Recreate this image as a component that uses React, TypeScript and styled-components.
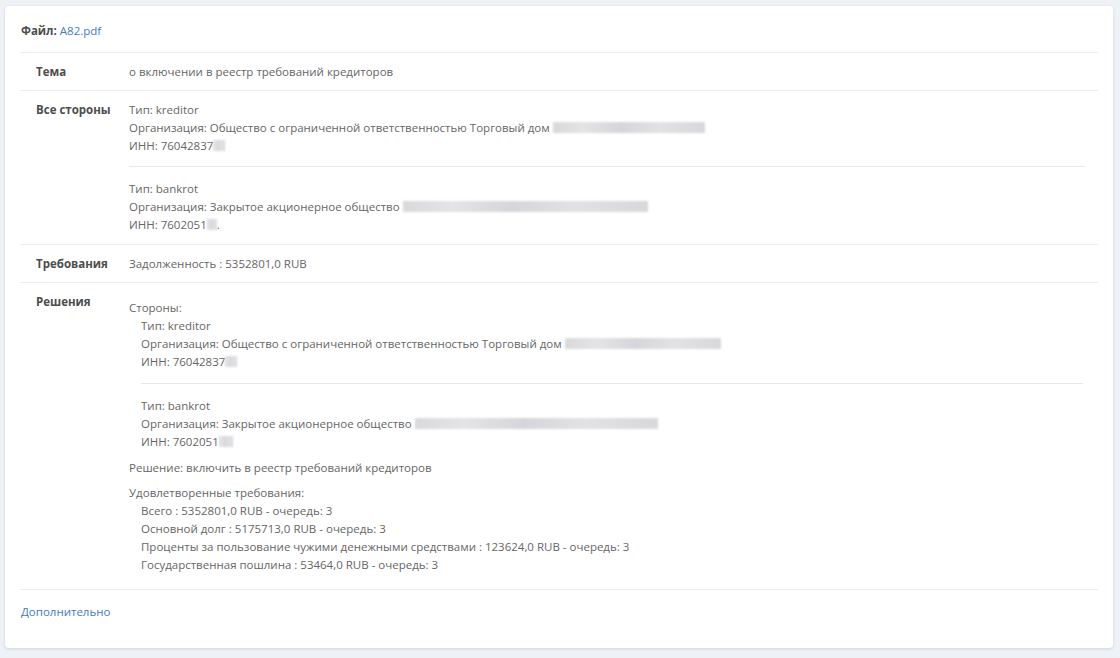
import React from "react";
import styled, { createGlobalStyle } from "styled-components";

const GlobalStyle = createGlobalStyle`
  html, body { margin: 0; padding: 0; background: #eef1f6; }
  body { font-family: "Open Sans", "Noto Sans", sans-serif; }
  * { box-sizing: border-box; }
`;

const Page = styled.div`
  padding: 6px 7px 11px 5px;
  min-height: 658px;
`;

const Card = styled.div`
  background: #fff;
  border-radius: 4px;
  box-shadow: 0 1px 3px rgba(60, 75, 110, 0.18);
  padding: 0 15px 0 15px;
  font-size: 11.5px;
  color: #666;
  line-height: 18px;
`;

const FileLine = styled.div`
  padding: 16px 0 12px 1px;
  border-bottom: 1px solid #eceef1;
`;

const Bold = styled.span`
  font-weight: 700;
  color: #4d4d4d;
`;

const Link = styled.a`
  color: #3f7cc4;
  text-decoration: none;
`;

const Row = styled.div`
  display: grid;
  grid-template-columns: 109px 1fr;
  border-bottom: 1px solid #eceef1;
`;

const Label = styled.div`
  padding: 10px 0 9px 16px;
  font-weight: 700;
  color: #4d4d4d;
`;

const Value = styled.div<{ $top?: number; $bottom?: number }>`
  padding: ${(p) => p.$top ?? 10}px 0 ${(p) => p.$bottom ?? 9}px 0;
`;

const Party = styled.div<{ $indent?: number; $right?: number }>`
  margin-left: ${(p) => p.$indent ?? 0}px;
  margin-right: ${(p) => p.$right ?? 13}px;
  & + & {
    border-top: 1px solid #e6e8ec;
  }
`;

const PartyInner = styled.div<{ $top: number; $bottom: number }>`
  padding: ${(p) => p.$top}px 0 ${(p) => p.$bottom}px 0;
`;

const Line = styled.div``;

const Indented = styled.div`
  padding-left: 12px;
`;

const Block = styled.div<{ $mt: number }>`
  margin-top: ${(p) => p.$mt}px;
`;

const Blur = styled.span<{ $w: number }>`
  display: inline-block;
  vertical-align: middle;
  width: ${(p) => p.$w}px;
  height: 11px;
  margin-top: -2px;
  background: linear-gradient(90deg, #d9d9dc, #e4e4e7 20%, #d6d6da 45%, #e2e2e5 70%, #d8d8dc);
  filter: blur(1.2px);
`;

const Footer = styled.div`
  padding: 13px 0 27px 1px;
`;

type PartyData = { type: string; org: string; orgBlur: number; inn: string; innBlur: number; dot?: boolean };

const PartyLines: React.FC<{ p: PartyData }> = ({ p }) => (
  <>
    <Line>Тип: {p.type}</Line>
    <Line>
      Организация: {p.org} <Blur $w={p.orgBlur} />
    </Line>
    <Line>
      ИНН: {p.inn}
      <Blur $w={p.innBlur} />
      {p.dot ? "." : ""}
    </Line>
  </>
);

const kred1: PartyData = {
  type: "kreditor",
  org: "Общество с ограниченной ответственностью Торговый дом",
  orgBlur: 152,
  inn: "76042837",
  innBlur: 12,
};
const bank1: PartyData = {
  type: "bankrot",
  org: "Закрытое акционерное общество",
  orgBlur: 245,
  inn: "7602051",
  innBlur: 10,
  dot: true,
};
const kred2: PartyData = { ...kred1, orgBlur: 156 };
const bank2: PartyData = { ...bank1, orgBlur: 243, innBlur: 14, dot: false };

export default function App() {
  return (
    <>
      <GlobalStyle />
      <Page>
        <Card>
          <FileLine>
            <Bold>Файл:</Bold> <Link href="#">A82.pdf</Link>
          </FileLine>
          <Row>
            <Label>Тема</Label>
            <Value>о включении в реестр требований кредиторов</Value>
          </Row>
          <Row>
            <Label>Все стороны</Label>
            <Value $top={0} $bottom={0}>
              <Party>
                <PartyInner $top={10} $bottom={11}>
                  <PartyLines p={kred1} />
                </PartyInner>
              </Party>
              <Party>
                <PartyInner $top={13} $bottom={10}>
                  <PartyLines p={bank1} />
                </PartyInner>
              </Party>
            </Value>
          </Row>
          <Row>
            <Label>Требования</Label>
            <Value>Задолженность : 5352801,0 RUB</Value>
          </Row>
          <Row>
            <Label>Решения</Label>
            <Value $top={16} $bottom={15}>
              <Line>Стороны:</Line>
              <Party $indent={12} $right={15}>
                <PartyInner $top={0} $bottom={12}>
                  <PartyLines p={kred2} />
                </PartyInner>
              </Party>
              <Party $indent={12} $right={15}>
                <PartyInner $top={13} $bottom={0}>
                  <PartyLines p={bank2} />
                </PartyInner>
              </Party>
              <Block $mt={8}>
                <Line>Решение: включить в реестр требований кредиторов</Line>
              </Block>
              <Block $mt={7}>
                <Line>Удовлетворенные требования:</Line>
                <Indented>
                  <Line>Всего : 5352801,0 RUB - очередь: 3</Line>
                  <Line>Основной долг : 5175713,0 RUB - очередь: 3</Line>
                  <Line>Проценты за пользование чужими денежными средствами : 123624,0 RUB - очередь: 3</Line>
                  <Line>Государственная пошлина : 53464,0 RUB - очередь: 3</Line>
                </Indented>
              </Block>
            </Value>
          </Row>
          <Footer>
            <Link href="#">Дополнительно</Link>
          </Footer>
        </Card>
      </Page>
    </>
  );
}
